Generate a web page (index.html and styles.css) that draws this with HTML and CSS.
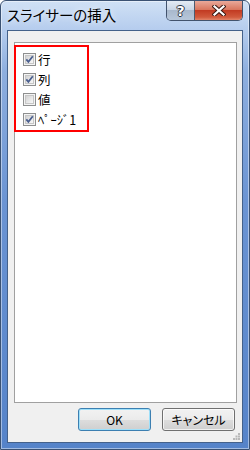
FILE: index.html
```html
<!DOCTYPE html>
<html lang="ja">
	<head>
		<meta charset="UTF-8" />
		<title>スライサーの挿入</title>
		<link rel="stylesheet" href="styles.css">
	</head>
	<body>
		<svg class="defs" width="0" height="0">
			<defs>
				<linearGradient id="cbFill" x1="0" y1="0" x2="1" y2="1">
					<stop offset="0" stop-color="#cfcfcf" />
					<stop offset="1" stop-color="#fbfbfb" />
				</linearGradient>
			</defs>
		</svg>

		<div class="window">
			<div class="titlebar">
				<span class="title">スライサーの挿入</span>
				<div class="caption-buttons">
					<span class="cap-btn help">?</span>
					<span class="cap-btn close">
						<svg width="14" height="11" viewBox="0 0 14 11">
							<path d="M2.5 1.5 L11.5 9.5 M11.5 1.5 L2.5 9.5" stroke="#3b1a14" stroke-width="4.2" stroke-linecap="square" fill="none" />
							<path d="M2.5 1.5 L11.5 9.5 M11.5 1.5 L2.5 9.5" stroke="#ffffff" stroke-width="2.2" stroke-linecap="square" fill="none" />
						</svg>
					</span>
				</div>
			</div>

			<div class="client">
				<div class="listbox">
					<!-- красная рамка вокруг списка -->
					<div class="group">
						<label class="row">
							<svg class="cb" width="13" height="13" viewBox="0 0 13 13">
								<rect x="0.5" y="0.5" width="12" height="12" fill="#f4f4f4" stroke="#8e8f8f" />
								<rect x="2.5" y="2.5" width="8" height="8" fill="url(#cbFill)" stroke="#c6c6c6" />
								<path d="M3.3 6.3 L5.4 8.8 L9.8 3.3" stroke="#4a5f8e" stroke-width="1.8" fill="none" />
							</svg>
							<span>行</span>
						</label>
						<label class="row">
							<svg class="cb" width="13" height="13" viewBox="0 0 13 13">
								<rect x="0.5" y="0.5" width="12" height="12" fill="#f4f4f4" stroke="#8e8f8f" />
								<rect x="2.5" y="2.5" width="8" height="8" fill="url(#cbFill)" stroke="#c6c6c6" />
								<path d="M3.3 6.3 L5.4 8.8 L9.8 3.3" stroke="#4a5f8e" stroke-width="1.8" fill="none" />
							</svg>
							<span>列</span>
						</label>
						<label class="row">
							<svg class="cb" width="13" height="13" viewBox="0 0 13 13">
								<rect x="0.5" y="0.5" width="12" height="12" fill="#f4f4f4" stroke="#8e8f8f" />
								<rect x="2.5" y="2.5" width="8" height="8" fill="url(#cbFill)" stroke="#c6c6c6" />
							</svg>
							<span>値</span>
						</label>
						<label class="row">
							<svg class="cb" width="13" height="13" viewBox="0 0 13 13">
								<rect x="0.5" y="0.5" width="12" height="12" fill="#f4f4f4" stroke="#8e8f8f" />
								<rect x="2.5" y="2.5" width="8" height="8" fill="url(#cbFill)" stroke="#c6c6c6" />
								<path d="M3.3 6.3 L5.4 8.8 L9.8 3.3" stroke="#4a5f8e" stroke-width="1.8" fill="none" />
							</svg>
							<span>ﾍﾟｰｼﾞ1</span>
						</label>
					</div>
				</div>

				<div class="buttons">
					<button class="btn default">OK</button>
					<button class="btn">キャンセル</button>
				</div>

				<svg class="grip" width="7" height="7" viewBox="0 0 7 7">
					<rect x="5" y="0" width="2" height="2" fill="#b8b8b8" />
					<rect x="2.5" y="2.5" width="2" height="2" fill="#b8b8b8" />
					<rect x="5" y="2.5" width="2" height="2" fill="#b8b8b8" />
					<rect x="0" y="5" width="2" height="2" fill="#b8b8b8" />
					<rect x="2.5" y="5" width="2" height="2" fill="#b8b8b8" />
					<rect x="5" y="5" width="2" height="2" fill="#b8b8b8" />
				</svg>
			</div>
		</div>
	</body>
</html>
```

FILE: styles.css
```css
:root {
	--font-jp: "Noto Sans CJK JP", "Noto Sans", sans-serif;
	--client-bg: #f0f0f0;
	--frame-border: #3b5273;
	--list-border: #a0a0a0;
}

body {
	margin: 0;
	background: #ffffff;
	font-family: var(--font-jp);
	font-feature-settings: "palt";
}

.defs {
	position: absolute;
}

.window {
	width: 250px;
	height: 450px;
	box-sizing: border-box;
	border: 1px solid var(--frame-border);
	border-radius: 6px 6px 0 0;
	padding: 0 6px 6px 6px;
	display: flex;
	flex-direction: column;
	background: linear-gradient(180deg, #d0e1f5 0, #b6cdee 28px, #8eafdf 70px, #6b94d3 200px, #5583c9 100%);
	box-shadow: inset 0 0 0 1px rgba(255, 255, 255, 0.45);
}

.titlebar {
	height: 29px;
	display: flex;
	align-items: flex-start;
	justify-content: space-between;
}

.title {
	margin-top: 5px;
	font-size: 14.5px;
	line-height: 18px;
	color: #000000;
	text-shadow: 0 0 6px rgba(255, 255, 255, 0.9);
}

.caption-buttons {
	display: flex;
	height: 19px;
	border: 1px solid #42536d;
	border-top: none;
	border-radius: 0 0 5px 5px;
	overflow: hidden;
}

.cap-btn {
	display: flex;
	align-items: center;
	justify-content: center;
	height: 19px;
}

.help {
	width: 27px;
	border-right: 1px solid #4c5b70;
	background: linear-gradient(180deg, #e4ebf4 0, #c9d6e6 45%, #a9b9cd 50%, #b7c7da 100%);
	color: #ffffff;
	font-family: "DejaVu Sans", sans-serif;
	font-weight: bold;
	font-size: 14px;
	text-shadow: -1px 0 #2d3440, 1px 0 #2d3440, 0 -1px #2d3440, 0 1px #2d3440;
}

.close {
	width: 47px;
	background: linear-gradient(180deg, #e9a99a 0, #d9775f 45%, #c23b23 50%, #d15a3d 85%, #e2856b 100%);
}

.client {
	position: relative;
	flex: 1;
	display: flex;
	flex-direction: column;
	background: var(--client-bg);
	border: 1px solid #44618a;
}

.listbox {
	flex: 1;
	margin: 11px 5px 0 6px;
	border: 1px solid var(--list-border);
	background: #ffffff;
	display: flex;
	flex-direction: column;
	align-items: flex-start;
}

.group {
	margin: 2px 0 0 -1px;
	width: 64px;
	padding: 2px 0 1px 7px;
	border: 2px solid #ff0000;
}

.row {
	height: 20px;
	display: flex;
	align-items: center;
	gap: 2px;
	font-size: 12.5px;
	color: #000000;
}

.cb {
	display: block;
	flex: none;
}

.buttons {
	display: flex;
	justify-content: flex-end;
	gap: 11px;
	padding: 5px 7px 11px 0;
}

.btn {
	width: 73px;
	height: 23px;
	padding: 0;
	font-family: var(--font-jp);
	font-feature-settings: "palt";
	font-size: 12px;
	color: #000000;
	border: 1px solid #707070;
	border-radius: 3px;
	background: linear-gradient(180deg, #f2f2f2 0, #ebebeb 50%, #dddddd 51%, #cfcfcf 100%);
	box-shadow: inset 0 0 0 1px rgba(255, 255, 255, 0.7);
}

.btn.default {
	border-color: #3c7fb1;
	box-shadow: inset 0 0 0 1px #9ee0fa;
}

.grip {
	position: absolute;
	right: 2px;
	bottom: 2px;
}
```
